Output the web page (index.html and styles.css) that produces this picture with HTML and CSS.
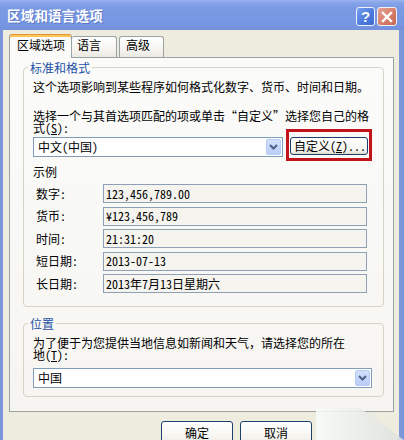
FILE: index.html
```html
<!DOCTYPE html>
<html lang="zh-CN">
<head>
<meta charset="utf-8">
<title>区域和语言选项</title>
<link rel="stylesheet" href="styles.css">
</head>
<body>
<div class="window">
  <div class="titlebar">
    <span class="title">区域和语言选项</span>
    <div class="tbtns">
      <span class="tbtn help">?</span>
      <span class="tbtn close"><svg width="12" height="12" viewBox="0 0 12 12"><path d="M2 2 L10 10 M10 2 L2 10" stroke="#fff" stroke-width="2.4" stroke-linecap="square"/></svg></span>
    </div>
  </div>
  <div class="body">
    <div class="tabs">
      <div class="tab sel t1">区域选项</div>
      <div class="tab t2">语言</div>
      <div class="tab t3">高级</div>
    </div>
    <div class="panel">
      <fieldset class="group g1">
        <legend>标准和格式</legend>
        <p class="txt">这个选项影响到某些程序如何格式化数字、货币、时间和日期。</p>
        <p class="txt p2">选择一个与其首选项匹配的项或单击“自定义”选择您自己的格<br>式(<u>S</u>):</p>
        <div class="comborow">
          <div class="combo c1"><span class="cval">中文(中国)</span><span class="drop"><svg width="9" height="6" viewBox="0 0 9 6"><path d="M1 1 L4.5 4.5 L8 1" fill="none" stroke="#4d6185" stroke-width="2"/></svg></span></div>
          <div class="hl"><button class="btn custom" type="button">自定义(<u>Z</u>)...</button></div>
        </div>
        <div class="sample">示例</div>
        <div class="rows">
          <span class="lbl">数字:</span><span class="field">123,456,789.00</span>
          <span class="lbl">货币:</span><span class="field">¥123,456,789</span>
          <span class="lbl">时间:</span><span class="field">21:31:20</span>
          <span class="lbl">短日期:</span><span class="field">2013-07-13</span>
          <span class="lbl">长日期:</span><span class="field">2013年7月13日星期六</span>
        </div>
      </fieldset>
      <fieldset class="group g2">
        <legend>位置</legend>
        <p class="txt">为了便于为您提供当地信息如新闻和天气，请选择您的所在<br>地(<u>T</u>):</p>
        <div class="combo c2"><span class="cval">中国</span><span class="drop"><svg width="9" height="6" viewBox="0 0 9 6"><path d="M1 1 L4.5 4.5 L8 1" fill="none" stroke="#4d6185" stroke-width="2"/></svg></span></div>
      </fieldset>
    </div>
    <div class="buttons">
      <button class="btn big" type="button">确定</button>
      <button class="btn big" type="button">取消</button>
      <span class="spacer"></span>
    </div>
  </div>
  <div class="mark"></div>
</div>
</body>
</html>
```
FILE: styles.css
```css
* { box-sizing: border-box; }
html, body { margin: 0; padding: 0; }
body {
  width: 404px;
  height: 440px;
  overflow: hidden;
  font-family: "Noto Sans Mono CJK SC", "Noto Sans CJK SC", sans-serif;
  font-size: 12px;
  color: #000;
  background: #7b95dc;
}
.window {
  position: relative;
  width: 404px;
  height: 440px;
  display: flex;
  flex-direction: column;
  background: #7d96da;
}
.titlebar {
  height: 30px;
  flex: none;
  display: flex;
  align-items: center;
  padding: 0 7px 0 7px;
  background: linear-gradient(#9ab3ef 0, #86a3ea 3px, #7b9ae4 8px, #7796e2 24px, #7390dd 30px);
}
.title {
  flex: 1;
  color: #fff;
  font-family: "Noto Sans CJK SC", sans-serif;
  font-weight: bold;
  font-size: 13.5px;
  letter-spacing: 0.2px;
  text-shadow: 1px 1px 0 rgba(40, 60, 140, 0.35);
  margin-top: -1px;
}
.tbtns { display: flex; gap: 2px; margin-top: 3px; }
.tbtn {
  width: 19px;
  height: 19px;
  border: 1px solid #eef2fb;
  border-radius: 3px;
  display: flex;
  align-items: center;
  justify-content: center;
}
.help {
  background: linear-gradient(135deg, #7aa0ee, #4a78dc 60%, #3f6bd0);
  color: #fff;
  font-family: "Liberation Sans", sans-serif;
  font-weight: bold;
  font-size: 15px;
}
.close {
  width: 20px;
  background: linear-gradient(135deg, #e6a294, #d57a66 60%, #c86a57);
}
.body {
  flex: 1;
  margin: 0 5px 0 3px;
  background: #eeebdf;
  padding: 4px 5px 0 6px;
  display: flex;
  flex-direction: column;
}
.tabs {
  height: 24px;
  display: flex;
  align-items: flex-end;
  position: relative;
  z-index: 1;
  margin-bottom: -1px;
}
.tab {
  height: 21px;
  margin-bottom: 1px;
  border: 1px solid #9aa3a4;
  border-bottom: none;
  border-radius: 3px 3px 0 0;
  background: linear-gradient(#ffffff, #f6f5f1 60%, #e9e8e1);
  padding: 2px 0 0 6px;
  line-height: 12px;
}
.tab.sel {
  height: 24px;
  margin-bottom: 0;
  background: #fafaf8;
  border-top-color: #e2952f;
  box-shadow: inset 0 2px 0 #fbc55a;
  padding: 4px 0 0 7px;
}
.t1 { width: 63px; }
.t2 { width: 45px; border-left: none; padding-left: 5px; }
.t3 { width: 45px; margin-left: 2px; }
.panel {
  height: 355px;
  flex: none;
  border: 1px solid #9aa3a4;
  background: linear-gradient(#fbfbfa, #f6f5f1);
  padding: 3px 9px 0 13px;
}
.group {
  margin: 0;
  min-width: 0;
  border: 1px solid #d6d4c6;
  border-radius: 4px;
  padding: 7px 11px 13px 9px;
}
.group legend {
  padding: 0 2px;
  margin-left: -5px;
  line-height: 13px;
  color: #2350a6;
}
.g2 { margin-top: 10px; padding-bottom: 8px; }
.txt { margin: 0; line-height: 12px; }
.p2 { margin-top: 17px; }
.comborow { display: flex; align-items: flex-start; margin-top: 3px; }
.combo {
  height: 20px;
  border: 1px solid #7f9db9;
  background: #fff;
  display: flex;
  align-items: center;
  padding: 0 1px 0 4px;
}
.c1 { width: 250px; }
.c2 { width: 339px; margin-top: 7px; }
.cval { flex: 1; line-height: 12px; }
.drop {
  width: 15px;
  height: 16px;
  border: 1px solid #b8cbf1;
  border-radius: 2px;
  background: linear-gradient(#d3e0fd, #b9cdf8);
  display: flex;
  align-items: center;
  justify-content: center;
}
.hl { position: relative; margin-left: 7px; }
.hl::after {
  content: "";
  position: absolute;
  left: -4px;
  right: -4px;
  top: -8px;
  bottom: -6px;
  border: 3px solid #c2131c;
}
.btn {
  font: inherit;
  color: #000;
  border: 1px solid #1c3f6e;
  border-radius: 3px;
  background: linear-gradient(#ffffff, #f4f3ee 80%, #dcd8c8);
  padding: 0;
  line-height: 12px;
}
.custom { width: 78px; height: 18px; text-align: left; padding-left: 3px; }
.sample { margin-top: 9px; line-height: 12px; }
.rows {
  margin-top: 6px;
  display: grid;
  grid-template-columns: 70px 264px;
  grid-auto-rows: 19px;
  row-gap: 3.5px;
  align-items: center;
}
.lbl { padding-left: 3px; line-height: 12px; }
.field {
  height: 19px;
  border: 1px solid #8ea0b6;
  background: #f5f4ef;
  padding-left: 2px;
  display: flex;
  align-items: center;
  line-height: 12px;
}
.buttons {
  display: flex;
  justify-content: flex-end;
  gap: 7px;
  margin-top: 9px;
  padding-right: 3px;
}
.big { width: 72px; height: 23px; }
.spacer { width: 72px; height: 23px; }
.mark {
  position: absolute;
  left: 316px;
  top: 408px;
  width: 88px;
  height: 32px;
  background: linear-gradient(90deg, rgba(248, 251, 248, 0.9), rgba(220, 224, 220, 0.85));
  clip-path: polygon(0 0, 50% 0, 100% 100%, 0 100%);
}
```
